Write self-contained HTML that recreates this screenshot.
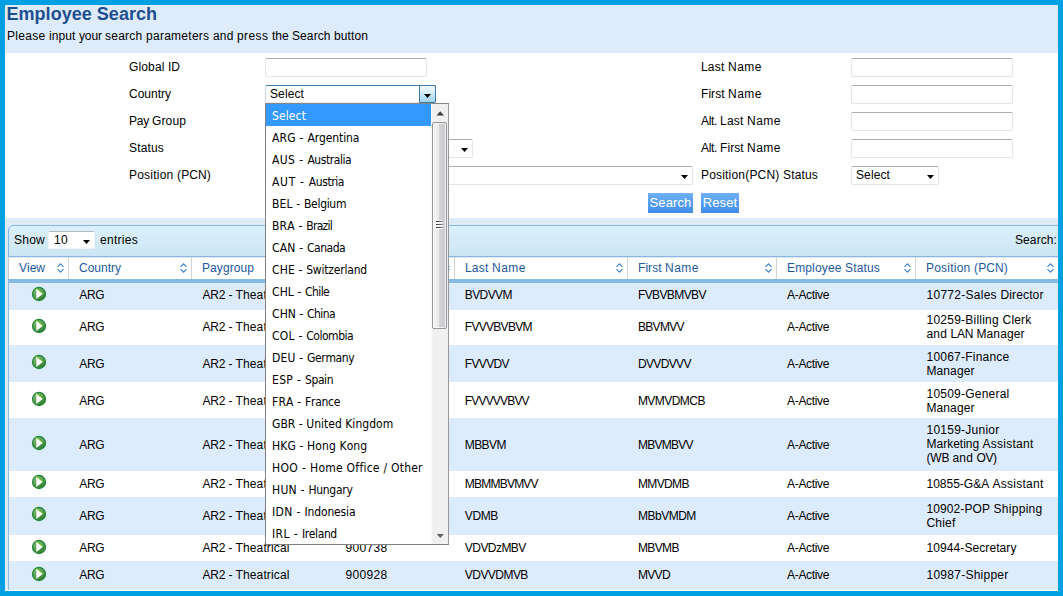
<!DOCTYPE html><html lang="en"><head><meta charset="utf-8"><title>Employee Search</title><style>
html,body{margin:0;padding:0}
body{width:1063px;height:596px;overflow:hidden;position:relative;background:#00a0e3;font-family:"Liberation Sans", Arial, sans-serif;font-size:12px;color:#000}
#pg{position:absolute;left:5px;top:5px;width:1053px;height:586px;overflow:hidden;background:#ddebfb}
#pg div,#pg span{position:absolute;box-sizing:border-box}
.t{white-space:pre;line-height:14px;height:14px;font-kerning:none}
.t i{font-style:normal}
h1{position:absolute;margin:0;left:1.5px;top:-2px;letter-spacing:.03px;font:bold 18px/22px "Liberation Sans", Arial, sans-serif;color:#1d4f8f;white-space:nowrap}
.white{background:#fff}
.inp{background:#fff;border:1px solid #e1e5ec;border-top-color:#abadb3;border-radius:2px;height:19px}
.sel{background:#fff;border:1px solid #e1e5ec;border-top-color:#abadb3;border-radius:2px;height:19px}
.arr{width:7px;height:4px}
.btn{color:#fff;font-size:13px;letter-spacing:.1px;line-height:19px;height:20px;text-align:center;background:linear-gradient(#6fb0f6,#3f8de9);white-space:nowrap}
.hd{color:#235a9c}
.sep{width:1px;background:#d3d3d3}
.li{left:0;width:165px;height:22px;line-height:22px;padding:1px 0 0 6px;font-family:"DejaVu Sans Condensed", "DejaVu Sans", "Liberation Sans", sans-serif;font-size:12px;white-space:pre;font-kerning:none;color:#000}
.li i{font-style:normal}
</style></head><body><div id="pg">
<h1>Employee Search</h1>
<div class="t " style="left:2px;top:24px;"><i style="letter-spacing:0.282px">Please </i><i style="letter-spacing:0.107px">input </i><i style="letter-spacing:-0.136px">your </i><i style="letter-spacing:0.235px">search </i><i style="letter-spacing:0.270px">parameters </i><i style="letter-spacing:0.161px">and </i><i style="letter-spacing:0.387px">press </i><i style="letter-spacing:-0.004px">the </i><i style="letter-spacing:0.092px">Search </i><i style="letter-spacing:0.106px">button</i></div>
<div class="white" style="left:0;top:48px;width:1053px;height:165px"></div>
<div class="t " style="left:124px;top:55px;"><i style="letter-spacing:0.140px">Global </i><i style="letter-spacing:0.000px">ID</i></div>
<div class="t " style="left:696px;top:55px;"><i style="letter-spacing:0.197px">Last </i><i style="letter-spacing:0.498px">Name</i></div>
<div class="t " style="left:124px;top:82px;"><i style="letter-spacing:-0.003px">Country</i></div>
<div class="t " style="left:696px;top:82px;"><i style="letter-spacing:0.057px">First </i><i style="letter-spacing:0.498px">Name</i></div>
<div class="t " style="left:124px;top:109px;"><i style="letter-spacing:-0.253px">Pay </i><i style="letter-spacing:0.130px">Group</i></div>
<div class="t " style="left:696px;top:109px;"><i style="letter-spacing:-0.334px">Alt. </i><i style="letter-spacing:0.197px">Last </i><i style="letter-spacing:0.498px">Name</i></div>
<div class="t " style="left:124px;top:136px;"><i style="letter-spacing:0.163px">Status</i></div>
<div class="t " style="left:696px;top:136px;"><i style="letter-spacing:-0.334px">Alt. </i><i style="letter-spacing:0.057px">First </i><i style="letter-spacing:0.498px">Name</i></div>
<div class="t " style="left:124px;top:163px;"><i style="letter-spacing:0.219px">Position </i><i style="letter-spacing:0.134px">(PCN)</i></div>
<div class="t " style="left:696px;top:163px;"><i style="letter-spacing:0.189px">Position(PCN) </i><i style="letter-spacing:0.163px">Status</i></div>
<div class="inp" style="left:260px;top:53px;width:162px"></div>
<div class="inp" style="left:846px;top:53px;width:162px"></div>
<div class="inp" style="left:846px;top:80px;width:162px"></div>
<div class="inp" style="left:846px;top:107px;width:162px"></div>
<div class="inp" style="left:846px;top:134px;width:162px"></div>
<div class="sel" style="left:260px;top:107px;width:171px;"><span class="t" style="left:4px;top:1px"><i style="letter-spacing:0.108px">Select</i></span><svg class="arr" width="7" height="4" viewBox="0 0 7 4" style="position:absolute;right:4px;top:8px"><path d="M0 0H7L3.5 4Z" fill="#000"/></svg></div>
<div class="sel" style="left:260px;top:134px;width:208px;"><span class="t" style="left:4px;top:1px"><i style="letter-spacing:0.108px">Select</i></span><svg class="arr" width="7" height="4" viewBox="0 0 7 4" style="position:absolute;right:4px;top:8px"><path d="M0 0H7L3.5 4Z" fill="#000"/></svg></div>
<div class="sel" style="left:260px;top:161px;width:428px;"><span class="t" style="left:4px;top:1px"><i style="letter-spacing:0.108px">Select</i></span><svg class="arr" width="7" height="4" viewBox="0 0 7 4" style="position:absolute;right:4px;top:8px"><path d="M0 0H7L3.5 4Z" fill="#000"/></svg></div>
<div class="sel" style="left:846px;top:161px;width:88px;"><span class="t" style="left:4px;top:1px"><i style="letter-spacing:0.108px">Select</i></span><svg class="arr" width="7" height="4" viewBox="0 0 7 4" style="position:absolute;right:4px;top:8px"><path d="M0 0H7L3.5 4Z" fill="#000"/></svg></div>
<div class="sel" style="left:260px;top:80px;width:171px;height:18px;border-color:#3d7bad #3d7bad #dfe9f3 #c4d9ea;border-radius:2px"><span class="t" style="left:4px;top:1px"><i style="letter-spacing:0.108px">Select</i></span><span style="right:-1px;top:-1px;width:17px;height:18px;border:1px solid #3d7bad;border-radius:0 2px 2px 0;background:linear-gradient(#f1f8fd 0%,#d9edfa 40%,#b4ddf6 75%,#a4d5f3 100%)"><svg class="arr" width="7" height="4" viewBox="0 0 7 4" style="position:absolute;left:4px;top:8px"><path d="M0 0H7L3.5 4Z" fill="#000"/></svg></span></div>
<div class="btn" style="left:643px;top:188px;width:45px">Search</div>
<div class="btn" style="left:696px;top:188px;width:38px">Reset</div>
<div style="left:0;top:216px;width:1053px;height:1px;background:#e1e6e8"></div>
<div style="left:3px;top:220px;width:1060px;height:32px;border:1px solid #85b8e8;border-radius:5px 0 0 0;background:linear-gradient(#daf0fb,#cde6f3)"></div>
<div class="t " style="left:9px;top:228px;"><i style="letter-spacing:0.246px">Show</i></div>
<div class="sel" style="left:43px;top:226px;width:47px;height:18px;border-color:#eef3f8;border-top-color:#b4b8be"><span class="t" style="left:5px;top:1px"><i style="letter-spacing:0.326px">10</i></span><svg class="arr" width="7" height="4" viewBox="0 0 7 4" style="position:absolute;right:4px;top:8px"><path d="M0 0H7L3.5 4Z" fill="#000"/></svg></div>
<div class="t " style="left:95px;top:228px;"><i style="letter-spacing:0.283px">entries</i></div>
<div class="t " style="left:1010px;top:228px;"><i style="letter-spacing:0.092px">Search:</i></div>
<div class="white" style="left:4px;top:252px;width:1050px;height:22px"></div>
<div style="left:3px;top:252px;width:1px;height:22px;background:#c8c8c8"></div>
<div style="left:4px;top:252px;width:1050px;height:1px;background:#e6e6e6"></div>
<div class="t hd" style="left:14px;top:256px;"><i style="letter-spacing:-0.002px">View</i></div>
<svg width="9" height="12" viewBox="0 0 9 12" style="position:absolute;left:50.85px;top:257px"><path d="M1.5 4.8 L4.5 1.8 L7.5 4.8 M1.5 7.2 L4.5 10.2 L7.5 7.2" fill="none" stroke="#3f86d0" stroke-width="1.2"/></svg>
<div class="t hd" style="left:74px;top:256px;"><i style="letter-spacing:-0.003px">Country</i></div>
<div class="sep" style="left:63px;top:252px;height:22px"></div>
<svg width="9" height="12" viewBox="0 0 9 12" style="position:absolute;left:173.85px;top:257px"><path d="M1.5 4.8 L4.5 1.8 L7.5 4.8 M1.5 7.2 L4.5 10.2 L7.5 7.2" fill="none" stroke="#3f86d0" stroke-width="1.2"/></svg>
<div class="t hd" style="left:197px;top:256px;"><i style="letter-spacing:0.079px">Paygroup</i></div>
<div class="sep" style="left:186px;top:252px;height:22px"></div>
<svg width="9" height="12" viewBox="0 0 9 12" style="position:absolute;left:316.85px;top:257px"><path d="M1.5 4.8 L4.5 1.8 L7.5 4.8 M1.5 7.2 L4.5 10.2 L7.5 7.2" fill="none" stroke="#3f86d0" stroke-width="1.2"/></svg>
<div class="t hd" style="left:340px;top:256px;"><i style="letter-spacing:0.140px">Global </i><i style="letter-spacing:0.000px">ID</i></div>
<div class="sep" style="left:329px;top:252px;height:22px"></div>
<svg width="9" height="12" viewBox="0 0 9 12" style="position:absolute;left:436.85px;top:257px"><path d="M1.5 4.8 L4.5 1.8 L7.5 4.8 M1.5 7.2 L4.5 10.2 L7.5 7.2" fill="none" stroke="#3f86d0" stroke-width="1.2"/></svg>
<div class="t hd" style="left:460px;top:256px;"><i style="letter-spacing:0.197px">Last </i><i style="letter-spacing:0.498px">Name</i></div>
<div class="sep" style="left:449px;top:252px;height:22px"></div>
<svg width="9" height="12" viewBox="0 0 9 12" style="position:absolute;left:609.85px;top:257px"><path d="M1.5 4.8 L4.5 1.8 L7.5 4.8 M1.5 7.2 L4.5 10.2 L7.5 7.2" fill="none" stroke="#3f86d0" stroke-width="1.2"/></svg>
<div class="t hd" style="left:633px;top:256px;"><i style="letter-spacing:0.057px">First </i><i style="letter-spacing:0.498px">Name</i></div>
<div class="sep" style="left:622px;top:252px;height:22px"></div>
<svg width="9" height="12" viewBox="0 0 9 12" style="position:absolute;left:758.85px;top:257px"><path d="M1.5 4.8 L4.5 1.8 L7.5 4.8 M1.5 7.2 L4.5 10.2 L7.5 7.2" fill="none" stroke="#3f86d0" stroke-width="1.2"/></svg>
<div class="t hd" style="left:782px;top:256px;"><i style="letter-spacing:0.145px">Employee </i><i style="letter-spacing:0.163px">Status</i></div>
<div class="sep" style="left:771px;top:252px;height:22px"></div>
<svg width="9" height="12" viewBox="0 0 9 12" style="position:absolute;left:897.85px;top:257px"><path d="M1.5 4.8 L4.5 1.8 L7.5 4.8 M1.5 7.2 L4.5 10.2 L7.5 7.2" fill="none" stroke="#3f86d0" stroke-width="1.2"/></svg>
<div class="t hd" style="left:921px;top:256px;"><i style="letter-spacing:0.219px">Position </i><i style="letter-spacing:0.134px">(PCN)</i></div>
<div class="sep" style="left:910px;top:252px;height:22px"></div>
<svg width="9" height="12" viewBox="0 0 9 12" style="position:absolute;left:1040.85px;top:257px"><path d="M1.5 4.8 L4.5 1.8 L7.5 4.8 M1.5 7.2 L4.5 10.2 L7.5 7.2" fill="none" stroke="#3f86d0" stroke-width="1.2"/></svg>
<div style="left:3px;top:274px;width:1060px;height:4px;background:#86bbe6"></div>
<svg width="0" height="0" style="position:absolute"><defs><linearGradient id="gi" x1="0.2" y1="0" x2="0.8" y2="1"><stop offset="0" stop-color="#8dbb80"/><stop offset="0.45" stop-color="#5e9f55"/><stop offset="1" stop-color="#27792a"/></linearGradient></defs></svg>
<div style="left:4px;top:278px;width:1050px;height:27px;background:#ddecfc"></div>
<svg width="16" height="16" viewBox="0 0 16 16" style="position:absolute;left:26px;top:281px"><circle cx="8" cy="8" r="6.5" fill="url(#gi)" stroke="#23893a" stroke-width="1.3"/><path d="M5.3 2.3 L12 7.7 L5.3 13 Z" fill="#fff"/><path d="M5.1 2.2 L12 7.7" stroke="#6ccf1a" stroke-width="1" fill="none"/></svg>
<div class="t " style="left:74.3px;top:283px;"><i style="letter-spacing:-0.335px">ARG</i></div>
<div class="t " style="left:197.5px;top:283px;"><i style="letter-spacing:-0.169px">AR2 </i><i style="letter-spacing:-0.165px">- </i><i style="letter-spacing:0.131px">Theatrical</i></div>
<div class="t " style="left:340.4px;top:283px;"><i style="letter-spacing:0.326px">900112</i></div>
<div class="t " style="left:459.8px;top:283px;"><i style="letter-spacing:-0.613px">BVDVVM</i></div>
<div class="t " style="left:632.9px;top:283px;"><i style="letter-spacing:-0.595px">FVBVBMVBV</i></div>
<div class="t " style="left:782.1px;top:283px;"><i style="letter-spacing:-0.335px">A-Active</i></div>
<div class="t " style="left:921.5px;top:283px;"><i style="letter-spacing:0.274px">10772-Sales </i><i style="letter-spacing:0.124px">Director</i></div>
<div style="left:4px;top:305px;width:1050px;height:35px;background:#fff"></div>
<svg width="16" height="16" viewBox="0 0 16 16" style="position:absolute;left:26px;top:313px"><circle cx="8" cy="8" r="6.5" fill="url(#gi)" stroke="#23893a" stroke-width="1.3"/><path d="M5.3 2.3 L12 7.7 L5.3 13 Z" fill="#fff"/><path d="M5.1 2.2 L12 7.7" stroke="#6ccf1a" stroke-width="1" fill="none"/></svg>
<div class="t " style="left:74.3px;top:315px;"><i style="letter-spacing:-0.335px">ARG</i></div>
<div class="t " style="left:197.5px;top:315px;"><i style="letter-spacing:-0.169px">AR2 </i><i style="letter-spacing:-0.165px">- </i><i style="letter-spacing:0.131px">Theatrical</i></div>
<div class="t " style="left:340.4px;top:315px;"><i style="letter-spacing:0.326px">900245</i></div>
<div class="t " style="left:459.8px;top:315px;"><i style="letter-spacing:-0.706px">FVVVBVBVM</i></div>
<div class="t " style="left:632.9px;top:315px;"><i style="letter-spacing:-0.669px">BBVMVV</i></div>
<div class="t " style="left:782.1px;top:315px;"><i style="letter-spacing:-0.335px">A-Active</i></div>
<div class="t " style="left:921.5px;top:308px;"><i style="letter-spacing:0.235px">10259-Billing </i><i style="letter-spacing:0.200px">Clerk</i></div>
<div class="t " style="left:921.5px;top:322px;"><i style="letter-spacing:0.161px">and </i><i style="letter-spacing:-0.169px">LAN </i><i style="letter-spacing:0.091px">Manager</i></div>
<div style="left:4px;top:340px;width:1050px;height:37px;background:#ddecfc"></div>
<svg width="16" height="16" viewBox="0 0 16 16" style="position:absolute;left:26px;top:349px"><circle cx="8" cy="8" r="6.5" fill="url(#gi)" stroke="#23893a" stroke-width="1.3"/><path d="M5.3 2.3 L12 7.7 L5.3 13 Z" fill="#fff"/><path d="M5.1 2.2 L12 7.7" stroke="#6ccf1a" stroke-width="1" fill="none"/></svg>
<div class="t " style="left:74.3px;top:352px;"><i style="letter-spacing:-0.335px">ARG</i></div>
<div class="t " style="left:197.5px;top:352px;"><i style="letter-spacing:-0.169px">AR2 </i><i style="letter-spacing:-0.165px">- </i><i style="letter-spacing:0.131px">Theatrical</i></div>
<div class="t " style="left:340.4px;top:352px;"><i style="letter-spacing:0.326px">900318</i></div>
<div class="t " style="left:459.8px;top:352px;"><i style="letter-spacing:-0.669px">FVVVDV</i></div>
<div class="t " style="left:632.9px;top:352px;"><i style="letter-spacing:-0.622px">DVVDVVV</i></div>
<div class="t " style="left:782.1px;top:352px;"><i style="letter-spacing:-0.335px">A-Active</i></div>
<div class="t " style="left:921.5px;top:345px;"><i style="letter-spacing:0.226px">10067-Finance</i></div>
<div class="t " style="left:921.5px;top:359px;"><i style="letter-spacing:0.091px">Manager</i></div>
<div style="left:4px;top:377px;width:1050px;height:36px;background:#fff"></div>
<svg width="16" height="16" viewBox="0 0 16 16" style="position:absolute;left:26px;top:386px"><circle cx="8" cy="8" r="6.5" fill="url(#gi)" stroke="#23893a" stroke-width="1.3"/><path d="M5.3 2.3 L12 7.7 L5.3 13 Z" fill="#fff"/><path d="M5.1 2.2 L12 7.7" stroke="#6ccf1a" stroke-width="1" fill="none"/></svg>
<div class="t " style="left:74.3px;top:389px;"><i style="letter-spacing:-0.335px">ARG</i></div>
<div class="t " style="left:197.5px;top:389px;"><i style="letter-spacing:-0.169px">AR2 </i><i style="letter-spacing:-0.165px">- </i><i style="letter-spacing:0.131px">Theatrical</i></div>
<div class="t " style="left:340.4px;top:389px;"><i style="letter-spacing:0.326px">900407</i></div>
<div class="t " style="left:459.8px;top:389px;"><i style="letter-spacing:-0.818px">FVVVVVBVV</i></div>
<div class="t " style="left:632.9px;top:389px;"><i style="letter-spacing:-0.542px">MVMVDMCB</i></div>
<div class="t " style="left:782.1px;top:389px;"><i style="letter-spacing:-0.335px">A-Active</i></div>
<div class="t " style="left:921.5px;top:382px;"><i style="letter-spacing:0.226px">10509-General</i></div>
<div class="t " style="left:921.5px;top:396px;"><i style="letter-spacing:0.091px">Manager</i></div>
<div style="left:4px;top:413px;width:1050px;height:53px;background:#ddecfc"></div>
<svg width="16" height="16" viewBox="0 0 16 16" style="position:absolute;left:26px;top:430px"><circle cx="8" cy="8" r="6.5" fill="url(#gi)" stroke="#23893a" stroke-width="1.3"/><path d="M5.3 2.3 L12 7.7 L5.3 13 Z" fill="#fff"/><path d="M5.1 2.2 L12 7.7" stroke="#6ccf1a" stroke-width="1" fill="none"/></svg>
<div class="t " style="left:74.3px;top:433px;"><i style="letter-spacing:-0.335px">ARG</i></div>
<div class="t " style="left:197.5px;top:433px;"><i style="letter-spacing:-0.169px">AR2 </i><i style="letter-spacing:-0.165px">- </i><i style="letter-spacing:0.131px">Theatrical</i></div>
<div class="t " style="left:340.4px;top:433px;"><i style="letter-spacing:0.326px">900466</i></div>
<div class="t " style="left:459.8px;top:433px;"><i style="letter-spacing:-0.601px">MBBVM</i></div>
<div class="t " style="left:632.9px;top:433px;"><i style="letter-spacing:-0.716px">MBVMBVV</i></div>
<div class="t " style="left:782.1px;top:433px;"><i style="letter-spacing:-0.335px">A-Active</i></div>
<div class="t " style="left:921.5px;top:418px;"><i style="letter-spacing:0.246px">10159-Junior</i></div>
<div class="t " style="left:921.5px;top:432px;"><i style="letter-spacing:-0.002px">Marketing </i><i style="letter-spacing:0.257px">Assistant</i></div>
<div class="t " style="left:921.5px;top:446px;"><i style="letter-spacing:-0.165px">(WB </i><i style="letter-spacing:0.161px">and </i><i style="letter-spacing:-0.445px">OV)</i></div>
<div style="left:4px;top:466px;width:1050px;height:26px;background:#fff"></div>
<svg width="16" height="16" viewBox="0 0 16 16" style="position:absolute;left:26px;top:469px"><circle cx="8" cy="8" r="6.5" fill="url(#gi)" stroke="#23893a" stroke-width="1.3"/><path d="M5.3 2.3 L12 7.7 L5.3 13 Z" fill="#fff"/><path d="M5.1 2.2 L12 7.7" stroke="#6ccf1a" stroke-width="1" fill="none"/></svg>
<div class="t " style="left:74.3px;top:472px;"><i style="letter-spacing:-0.335px">ARG</i></div>
<div class="t " style="left:197.5px;top:472px;"><i style="letter-spacing:-0.169px">AR2 </i><i style="letter-spacing:-0.165px">- </i><i style="letter-spacing:0.131px">Theatrical</i></div>
<div class="t " style="left:340.4px;top:472px;"><i style="letter-spacing:0.326px">900523</i></div>
<div class="t " style="left:459.8px;top:472px;"><i style="letter-spacing:-0.778px">MBMMBVMVV</i></div>
<div class="t " style="left:632.9px;top:472px;"><i style="letter-spacing:-0.610px">MMVDMB</i></div>
<div class="t " style="left:782.1px;top:472px;"><i style="letter-spacing:-0.335px">A-Active</i></div>
<div class="t " style="left:921.5px;top:472px;"><i style="letter-spacing:-0.004px">10855-G&amp;A </i><i style="letter-spacing:0.257px">Assistant</i></div>
<div style="left:4px;top:492px;width:1050px;height:38px;background:#ddecfc"></div>
<svg width="16" height="16" viewBox="0 0 16 16" style="position:absolute;left:26px;top:501px"><circle cx="8" cy="8" r="6.5" fill="url(#gi)" stroke="#23893a" stroke-width="1.3"/><path d="M5.3 2.3 L12 7.7 L5.3 13 Z" fill="#fff"/><path d="M5.1 2.2 L12 7.7" stroke="#6ccf1a" stroke-width="1" fill="none"/></svg>
<div class="t " style="left:74.3px;top:504px;"><i style="letter-spacing:-0.335px">ARG</i></div>
<div class="t " style="left:197.5px;top:504px;"><i style="letter-spacing:-0.169px">AR2 </i><i style="letter-spacing:-0.165px">- </i><i style="letter-spacing:0.131px">Theatrical</i></div>
<div class="t " style="left:340.4px;top:504px;"><i style="letter-spacing:0.326px">900671</i></div>
<div class="t " style="left:459.8px;top:504px;"><i style="letter-spacing:-0.417px">VDMB</i></div>
<div class="t " style="left:632.9px;top:504px;"><i style="letter-spacing:-0.477px">MBbVMDM</i></div>
<div class="t " style="left:782.1px;top:504px;"><i style="letter-spacing:-0.335px">A-Active</i></div>
<div class="t " style="left:921.5px;top:497px;"><i style="letter-spacing:0.096px">10902-POP </i><i style="letter-spacing:0.287px">Shipping</i></div>
<div class="t " style="left:921.5px;top:511px;"><i style="letter-spacing:0.197px">Chief</i></div>
<div style="left:4px;top:530px;width:1050px;height:26px;background:#fff"></div>
<svg width="16" height="16" viewBox="0 0 16 16" style="position:absolute;left:26px;top:533.5px"><circle cx="8" cy="8" r="6.5" fill="url(#gi)" stroke="#23893a" stroke-width="1.3"/><path d="M5.3 2.3 L12 7.7 L5.3 13 Z" fill="#fff"/><path d="M5.1 2.2 L12 7.7" stroke="#6ccf1a" stroke-width="1" fill="none"/></svg>
<div class="t " style="left:74.3px;top:536px;"><i style="letter-spacing:-0.335px">ARG</i></div>
<div class="t " style="left:197.5px;top:536px;"><i style="letter-spacing:-0.169px">AR2 </i><i style="letter-spacing:-0.165px">- </i><i style="letter-spacing:0.131px">Theatrical</i></div>
<div class="t " style="left:340.4px;top:536px;"><i style="letter-spacing:0.326px">900738</i></div>
<div class="t " style="left:459.8px;top:536px;"><i style="letter-spacing:-0.543px">VDVDzMBV</i></div>
<div class="t " style="left:632.9px;top:536px;"><i style="letter-spacing:-0.601px">MBVMB</i></div>
<div class="t " style="left:782.1px;top:536px;"><i style="letter-spacing:-0.335px">A-Active</i></div>
<div class="t " style="left:921.5px;top:536px;"><i style="letter-spacing:0.086px">10944-Secretary</i></div>
<div style="left:4px;top:556px;width:1050px;height:29px;background:#ddecfc"></div>
<svg width="16" height="16" viewBox="0 0 16 16" style="position:absolute;left:26px;top:561px"><circle cx="8" cy="8" r="6.5" fill="url(#gi)" stroke="#23893a" stroke-width="1.3"/><path d="M5.3 2.3 L12 7.7 L5.3 13 Z" fill="#fff"/><path d="M5.1 2.2 L12 7.7" stroke="#6ccf1a" stroke-width="1" fill="none"/></svg>
<div class="t " style="left:74.3px;top:563px;"><i style="letter-spacing:-0.335px">ARG</i></div>
<div class="t " style="left:197.5px;top:563px;"><i style="letter-spacing:-0.169px">AR2 </i><i style="letter-spacing:-0.165px">- </i><i style="letter-spacing:0.131px">Theatrical</i></div>
<div class="t " style="left:340.4px;top:563px;"><i style="letter-spacing:0.326px">900928</i></div>
<div class="t " style="left:459.8px;top:563px;"><i style="letter-spacing:-0.543px">VDVVDMVB</i></div>
<div class="t " style="left:632.9px;top:563px;"><i style="letter-spacing:-0.667px">MVVD</i></div>
<div class="t " style="left:782.1px;top:563px;"><i style="letter-spacing:-0.335px">A-Active</i></div>
<div class="t " style="left:921.5px;top:563px;"><i style="letter-spacing:0.252px">10987-Shipper</i></div>
<div style="left:3px;top:278px;width:1px;height:307px;background:#8fbce8"></div>
<div class="white" style="left:0;top:585px;width:1053px;height:1px"></div>
<div id="dd" style="left:260px;top:98px;width:184px;height:442px;background:#fff;border:1px solid #808080;border-top-color:#8a8682;border-right-color:#979797">
<div class="li" style="top:0px;background:#3399ff;color:#fff;"><i style="letter-spacing:0.109px">Select</i></div>
<div class="li" style="top:22px;"><i style="letter-spacing:0.231px">ARG - </i><i style="letter-spacing:-0.104px">Argentina</i></div>
<div class="li" style="top:44px;"><i style="letter-spacing:0.416px">AUS - </i><i style="letter-spacing:-0.440px">Australia</i></div>
<div class="li" style="top:66px;"><i style="letter-spacing:0.685px">AUT - </i><i style="letter-spacing:-0.402px">Austria</i></div>
<div class="li" style="top:88px;"><i style="letter-spacing:0.169px">BEL - </i><i style="letter-spacing:-0.311px">Belgium</i></div>
<div class="li" style="top:110px;"><i style="letter-spacing:0.194px">BRA - </i><i style="letter-spacing:-0.714px">Brazil</i></div>
<div class="li" style="top:132px;"><i style="letter-spacing:0.217px">CAN - </i><i style="letter-spacing:-0.482px">Canada</i></div>
<div class="li" style="top:154px;"><i style="letter-spacing:0.161px">CHE - </i><i style="letter-spacing:-0.205px">Switzerland</i></div>
<div class="li" style="top:176px;"><i style="letter-spacing:0.099px">CHL - </i><i style="letter-spacing:-0.577px">Chile</i></div>
<div class="li" style="top:198px;"><i style="letter-spacing:0.093px">CHN - </i><i style="letter-spacing:-0.561px">China</i></div>
<div class="li" style="top:220px;"><i style="letter-spacing:0.234px">COL - </i><i style="letter-spacing:-0.467px">Colombia</i></div>
<div class="li" style="top:242px;"><i style="letter-spacing:0.210px">DEU - </i><i style="letter-spacing:-0.377px">Germany</i></div>
<div class="li" style="top:264px;"><i style="letter-spacing:0.347px">ESP - </i><i style="letter-spacing:-0.426px">Spain</i></div>
<div class="li" style="top:286px;"><i style="letter-spacing:0.195px">FRA - </i><i style="letter-spacing:-0.256px">France</i></div>
<div class="li" style="top:308px;"><i style="letter-spacing:0.030px">GBR - </i><i style="letter-spacing:0.021px">United Kingdom</i></div>
<div class="li" style="top:330px;"><i style="letter-spacing:0.122px">HKG - </i><i style="letter-spacing:0.108px">Hong Kong</i></div>
<div class="li" style="top:352px;"><i style="letter-spacing:0.372px">HOO - </i><i style="letter-spacing:0.240px">Home Office / Other</i></div>
<div class="li" style="top:374px;"><i style="letter-spacing:0.259px">HUN - </i><i style="letter-spacing:-0.283px">Hungary</i></div>
<div class="li" style="top:396px;"><i style="letter-spacing:0.365px">IDN - </i><i style="letter-spacing:-0.146px">Indonesia</i></div>
<div class="li" style="top:418px;"><i style="letter-spacing:0.421px">IRL - </i><i style="letter-spacing:-0.395px">Ireland</i></div>
<div style="left:165px;top:0;width:17px;height:440px;background:linear-gradient(90deg,#fbfbfb 0,#efefef 2px,#f0f0f0 100%)">
<svg width="17" height="17" style="position:absolute;left:0;top:0"><path d="M5.5 11.5 L9.2 7.2 L13 11.5 Z" fill="#3c3c3c"/></svg>
<svg width="17" height="17" style="position:absolute;left:0;top:423px"><path d="M5.8 7 L9.3 11 L12.8 7 Z" fill="#606060"/></svg>
<div style="left:1px;top:18px;width:15px;height:207px;border:1px solid #979797;border-radius:2px;background:linear-gradient(90deg,#f5f5f5 0%,#ebebeb 42%,#d6d6da 48%,#cbcbcf 80%,#d9d9dd 100%);box-shadow:inset 0 0 0 1px rgba(255,255,255,.6)"><span style="left:3px;top:98px;width:7px;height:1px;background:linear-gradient(90deg,#333,#8a8a8a);box-shadow:0 1px 0 #fff,0 -1px 0 rgba(255,255,255,.5)"></span><span style="left:3px;top:101px;width:7px;height:1px;background:linear-gradient(90deg,#333,#8a8a8a);box-shadow:0 1px 0 #fff,0 -1px 0 rgba(255,255,255,.5)"></span><span style="left:3px;top:104px;width:7px;height:1px;background:linear-gradient(90deg,#333,#8a8a8a);box-shadow:0 1px 0 #fff,0 -1px 0 rgba(255,255,255,.5)"></span></div>
</div>
</div>
</div></body></html>
